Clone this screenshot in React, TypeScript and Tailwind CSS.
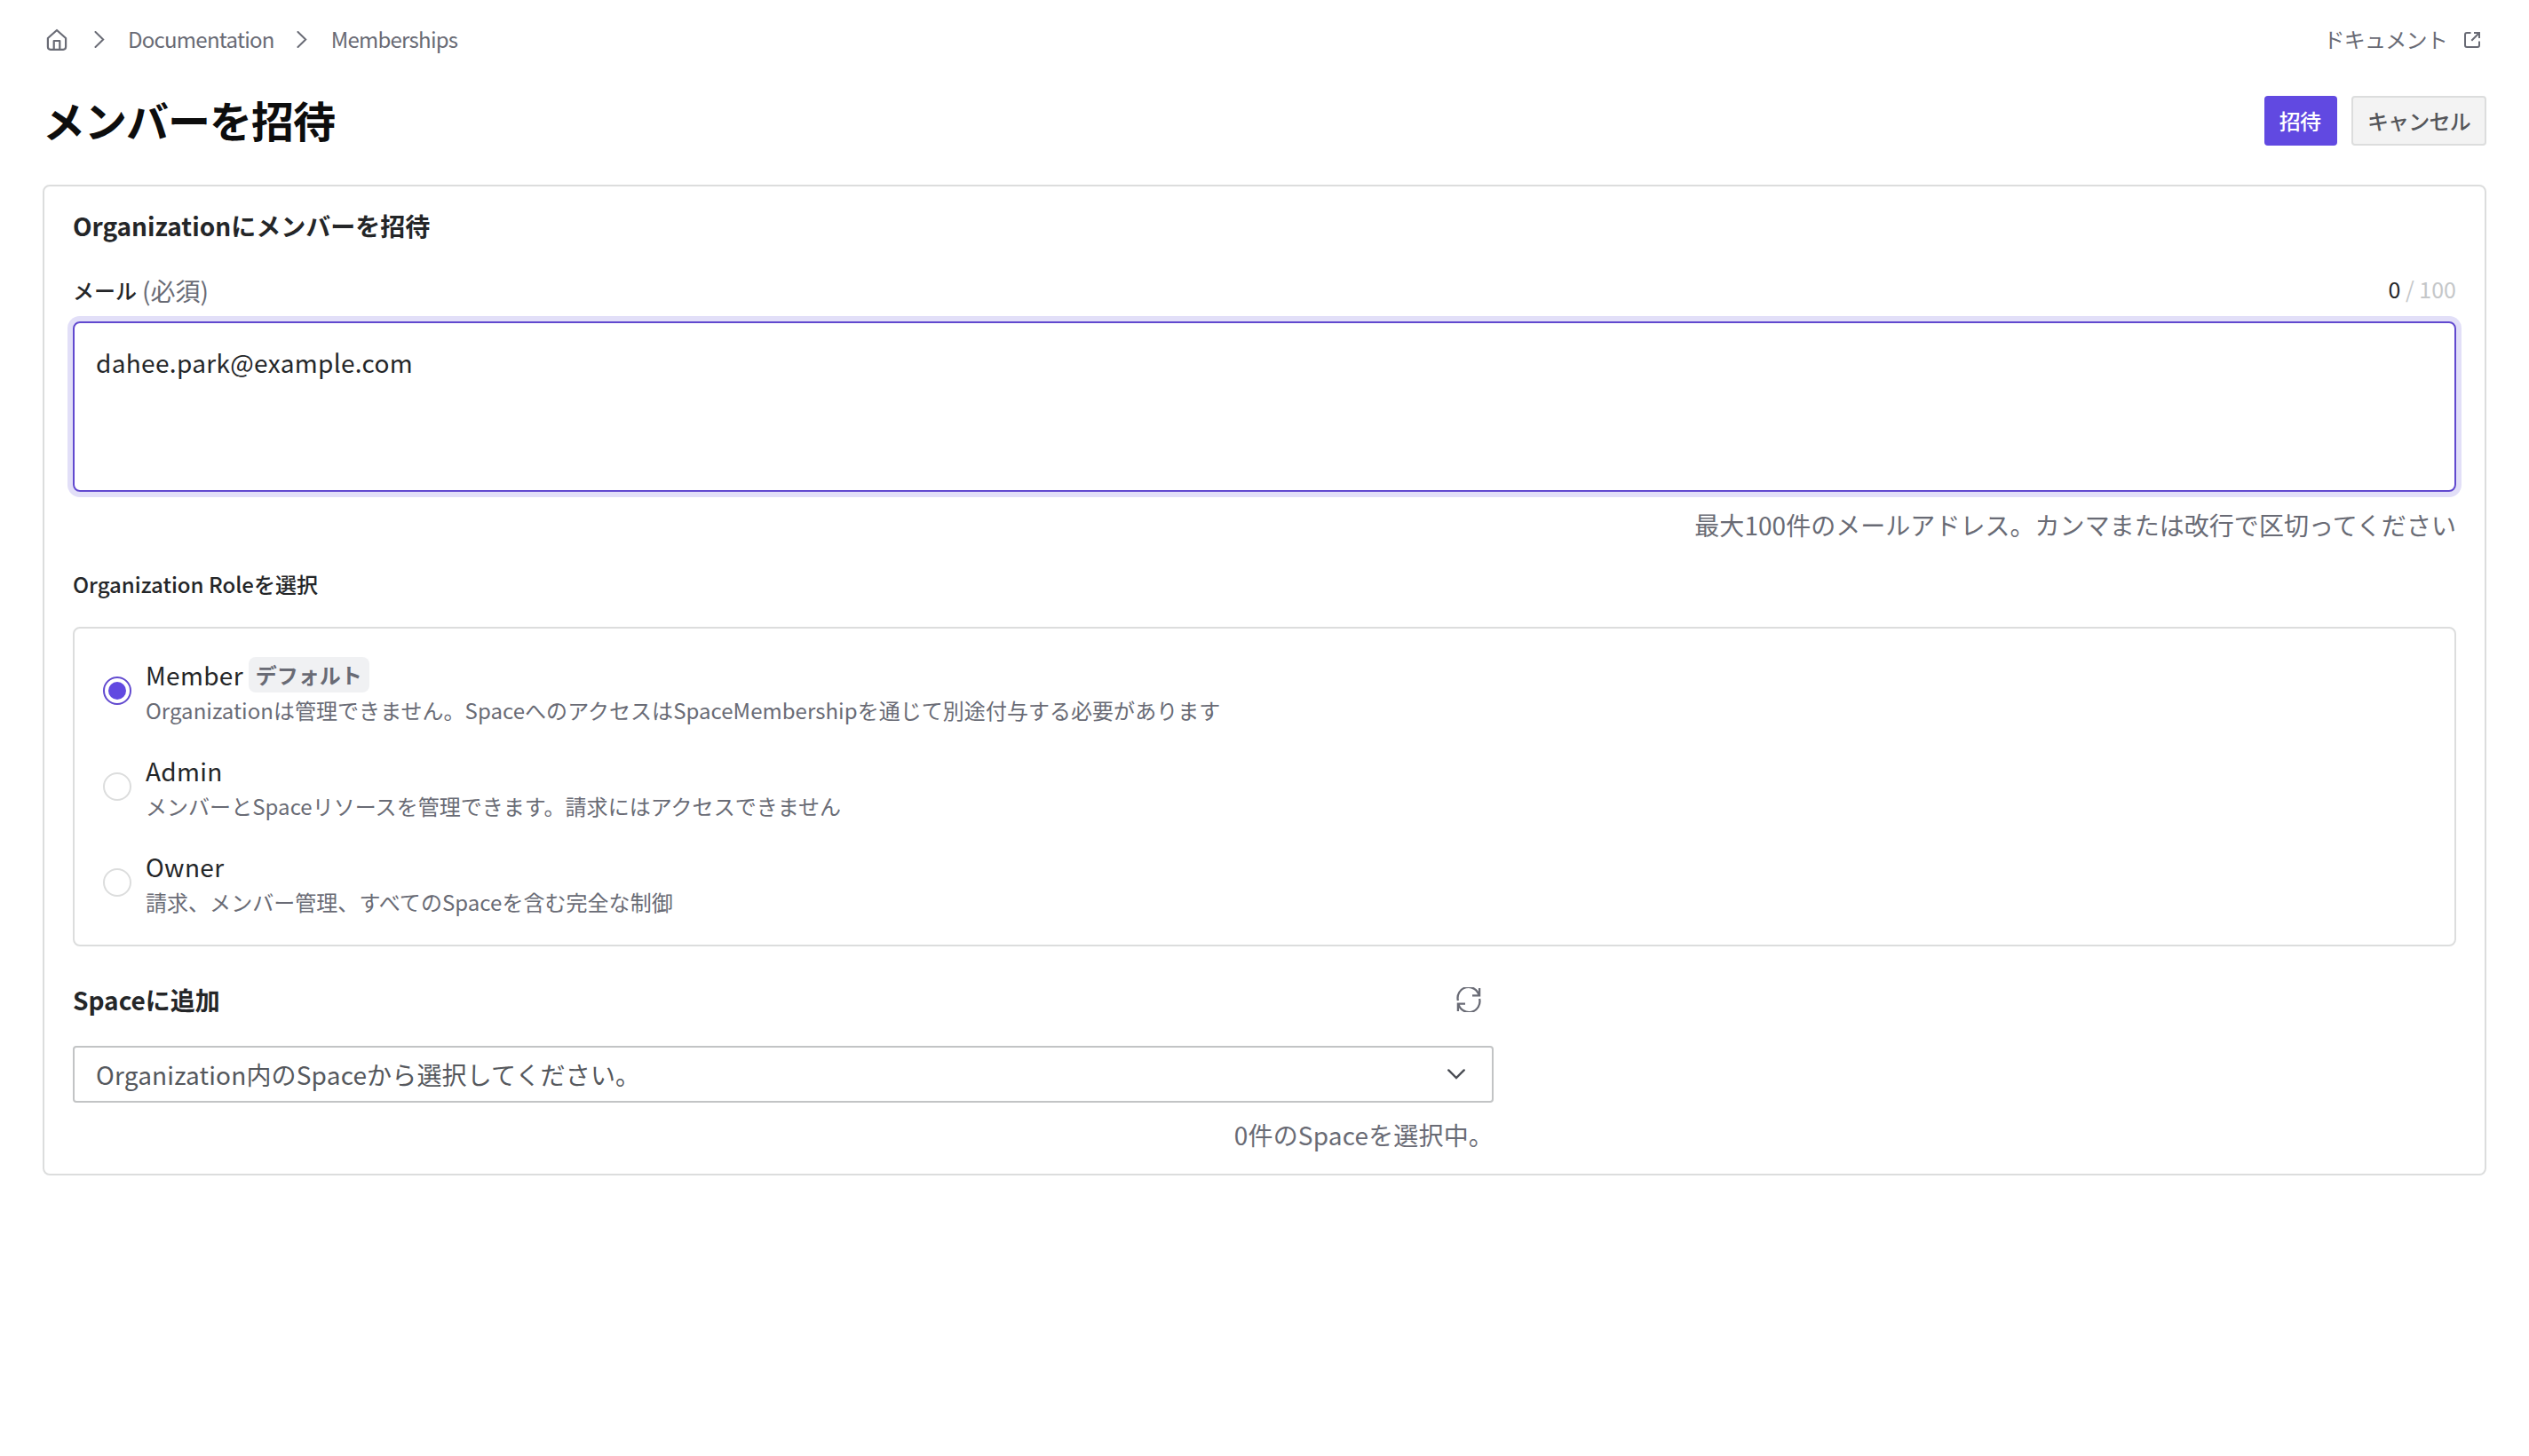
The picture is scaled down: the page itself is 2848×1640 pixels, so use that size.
import { useState } from 'react';

const roles = [
  {
    name: 'Member',
    isDefault: true,
    description: 'Organizationは管理できません。SpaceへのアクセスはSpaceMembershipを通じて別途付与する必要があります',
  },
  {
    name: 'Admin',
    description: 'メンバーとSpaceリソースを管理できます。請求にはアクセスできません',
  },
  {
    name: 'Owner',
    description: '請求、メンバー管理、すべてのSpaceを含む完全な制御',
  },
];

function HomeIcon() {
  return (
    <svg width="24" height="26" viewBox="0 0 24 26" fill="none" stroke="currentColor" strokeWidth="2.2" strokeLinejoin="round">
      <path d="M1.9 11 L12 2 L22.1 11 V20.8 A3 3 0 0 1 19.1 23.8 H4.9 A3 3 0 0 1 1.9 20.8 Z" />
      <path d="M8.7 23.5 V14 H15.3 V23.5" />
    </svg>
  );
}

function ChevronRight() {
  return (
    <svg width="12" height="20" viewBox="0 0 12 20" fill="none" stroke="currentColor" strokeWidth="2" strokeLinecap="round">
      <path d="M1.5 1 L10.2 9.5 L1.5 18" />
    </svg>
  );
}

function ExternalIcon() {
  return (
    <svg width="20" height="20" viewBox="0 0 20 20" fill="none" stroke="currentColor" strokeWidth="2">
      <path d="M8.5 2 H4 A2 2 0 0 0 2 4 V16 A2 2 0 0 0 4 18 H16 A2 2 0 0 0 18 16 V11.5" />
      <path d="M12 2 H18 V8 M18 2 L9.3 10.7" />
    </svg>
  );
}

function RefreshIcon() {
  return (
    <svg width="28" height="28" viewBox="0 0 28 28" fill="none" stroke="currentColor" strokeWidth="2.3">
      <path d="M1.9 15 A12.1 12.1 0 0 1 25.6 9.2" />
      <path d="M26.1 1 V9.3 H18" />
      <path d="M26.1 13 A12.1 12.1 0 0 1 2.4 18.8" />
      <path d="M1.9 27 V18.7 H10" />
    </svg>
  );
}

export default function App() {
  const [selected, setSelected] = useState('Member');

  return (
    <div className="min-h-[1640px] bg-white px-12 font-['Noto_Sans_CJK_JP',sans-serif] text-[28px] text-[#242628]">
      <header className="flex h-[90px] items-center justify-between pr-1.5 text-2xl tracking-[-0.75px] text-[#696b75]">
        <nav className="flex items-center pl-1">
          <HomeIcon />
          <span className="ml-[30px]"><ChevronRight /></span>
          <span className="ml-[26px] pb-0.5">Documentation</span>
          <span className="ml-[25px]"><ChevronRight /></span>
          <span className="ml-[27px] pb-0.5">Memberships</span>
        </nav>
        <a className="flex items-center gap-[18px]">
          <span className="pb-0.5">ドキュメント</span>
          <ExternalIcon />
        </a>
      </header>

      <div className="mt-3.5 flex h-16 items-center justify-between">
        <h1 className="pb-1 text-5xl font-bold tracking-[-1px] text-[#0d0d0d]">メンバーを招待</h1>
        <div className="flex gap-4 text-2xl font-medium tracking-[-0.75px]">
          <button className="h-14 w-[82px] rounded bg-[#6149e1] pr-0.5 text-white">招待</button>
          <button className="h-14 w-[152px] rounded border-2 border-[#dcdddd] bg-[#f3f3f3] text-[#55565a]">キャンセル</button>
        </div>
      </div>

      <main className="mt-10 h-[1116px] rounded-lg border-2 border-[#dcdddd] px-8">
        <h2 className="pt-[23px] leading-[42px] font-bold">Organizationにメンバーを招待</h2>

        <div className="mt-[31px] flex h-[42px] items-center justify-between">
          <label className="flex items-center gap-1.5 leading-[42px]">
            <span className="text-2xl leading-[42px] font-medium">メール</span>
            <span className="text-[#696b75]">(必須)</span>
          </label>
          <p className="pb-0.5 text-[25px] text-[#c5c7c9]">
            <span className="text-[#242628]">0</span> / 100
          </p>
        </div>
        <div className="mt-3.5 h-48 rounded-lg border-2 border-[#6149cf] px-6 pt-[23px] leading-[42px] tracking-[0.33px] shadow-[0_0_0_6px_#e2dff8]">
          dahee.park@example.com
        </div>
        <p className="mt-4 text-right leading-[42px] tracking-[0.04px] text-[#696b75]">最大100件のメールアドレス。カンマまたは改行で区切ってください</p>

        <h3 className="mt-7 text-2xl leading-9 font-medium">Organization Roleを選択</h3>
        <div className="mt-[30px] flex h-90 flex-col gap-7 rounded-lg border-2 border-[#dcdddd] px-8 pt-[30px]">
          {roles.map((role) => (
            <div key={role.name} className="flex h-20 cursor-pointer items-center gap-4" onClick={() => setSelected(role.name)}>
              {selected === role.name ? (
                <span className="flex size-8 items-center justify-center rounded-full border-2 border-[#6149cf]">
                  <span className="size-5 rounded-full bg-[#6149e1]" />
                </span>
              ) : (
                <span className="size-8 rounded-full border-2 border-[#dcdddd]" />
              )}
              <div>
                <div className="flex h-11 items-center gap-1.5 leading-[42px]">
                  <span className="tracking-[0.33px]">{role.name}</span>
                  {role.isDefault && (
                    <span className="h-10 rounded-lg bg-[#f0f1f3] px-2 text-2xl leading-10 font-bold text-[#696b75]">デフォルト</span>
                  )}
                </div>
                <p className="text-2xl leading-9 tracking-[0.04px] text-[#696b75]">{role.description}</p>
              </div>
            </div>
          ))}
        </div>

        <div className="w-[1600px]">
          <div className="mt-[39px] flex h-[42px] items-center justify-between pr-3.5">
            <h2 className="leading-[42px] font-bold">Spaceに追加</h2>
            <span className="text-[#696b75]"><RefreshIcon /></span>
          </div>
          <div className="mt-[31px] flex h-16 items-center justify-between rounded border-2 border-[#c2c4c5] pr-[30px] pl-6 tracking-[0.17px] text-[#55585d]">
            <span>Organization内のSpaceから選択してください。</span>
            <svg width="20" height="12" viewBox="0 0 20 12" fill="none" stroke="#4a4d54" strokeWidth="2.4" strokeLinecap="round">
              <path d="M1.3 1.4 L10 10 L18.7 1.4" />
            </svg>
          </div>
          <p className="mt-[15px] text-right leading-[42px] tracking-[0.17px] text-[#696b75]">0件のSpaceを選択中。</p>
        </div>
      </main>
    </div>
  );
}
